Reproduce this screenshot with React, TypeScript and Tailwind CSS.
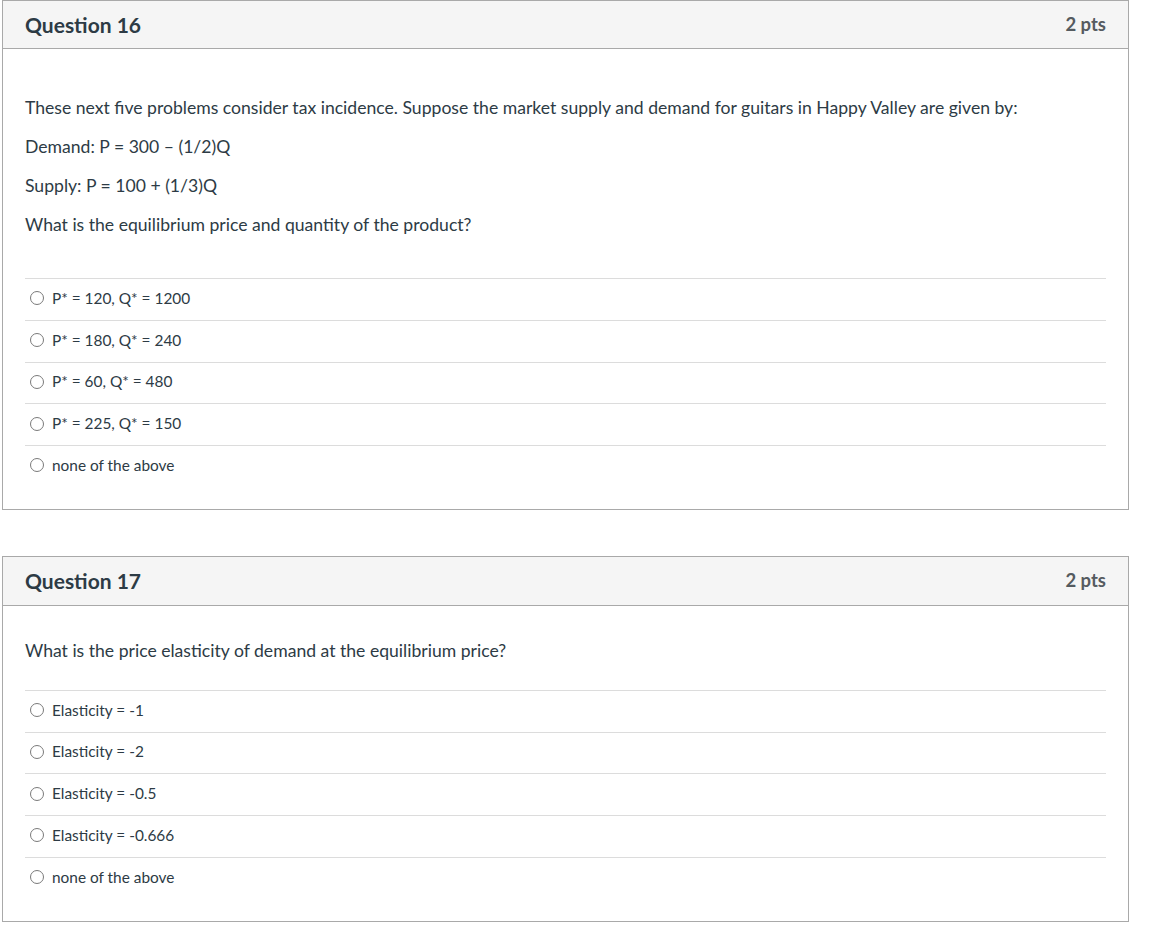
const font = { fontFamily: 'Lato, "Noto Sans", sans-serif' };

interface Question {
  title: string;
  points: string;
  paragraphs: string[];
  answers: string[];
  headerH: string;
  bodyTop: string;
  answersTop: string;
}

const questions: Question[] = [
  {
    title: 'Question 16',
    points: '2 pts',
    paragraphs: [
      'These next five problems consider tax incidence. Suppose the market supply and demand for guitars in Happy Valley are given by:',
      'Demand: P = 300 \u2013 (1/2)Q',
      'Supply: P = 100 + (1/3)Q',
      'What is the equilibrium price and quantity of the product?',
    ],
    answers: ['P* = 120, Q* = 1200', 'P* = 180, Q* = 240', 'P* = 60, Q* = 480', 'P* = 225, Q* = 150', 'none of the above'],
    headerH: 'h-[48px]',
    bodyTop: 'pt-[47px]',
    answersTop: 'mt-[41px]',
  },
  {
    title: 'Question 17',
    points: '2 pts',
    paragraphs: ['What is the price elasticity of demand at the equilibrium price?'],
    answers: ['Elasticity = -1', 'Elasticity = -2', 'Elasticity = -0.5', 'Elasticity = -0.666', 'none of the above'],
    headerH: 'h-[49px]',
    bodyTop: 'pt-[33px]',
    answersTop: 'mt-[27px]',
  },
];

function QuestionCard({ q }: { q: Question }) {
  return (
    <div className="border border-[#a9a9a9] bg-white">
      <div
        className={`flex items-center justify-between border-b border-[#a9a9a9] bg-[#f5f5f5] px-[22px] ${q.headerH}`}
      >
        <h2 className="text-[21px] font-bold text-[#2d3b45]">{q.title}</h2>
        <span className="text-[18.5px] font-bold text-[#555b60]">{q.points}</span>
      </div>
      <div className={`px-[22px] pb-[22px] ${q.bodyTop}`}>
        <div className="flex flex-col gap-[15px] text-[17.6px] leading-6 text-[#2d3b45]">
          {q.paragraphs.map((p) => (
            <p key={p}>{p}</p>
          ))}
        </div>
        <div className={q.answersTop}>
          {q.answers.map((a) => (
            <div key={a} className="flex h-[41.75px] items-center border-t border-[#dcdcdc] pb-[2px] pl-[5px]">
              <span className="h-[14px] w-[14px] shrink-0 rounded-full border border-[#7a7a7a] bg-white" />
              <span className="ml-[8px] text-[15.4px] text-[#2d3b45]">{a}</span>
            </div>
          ))}
        </div>
      </div>
    </div>
  );
}

export default function App() {
  return (
    <div className="min-h-screen bg-white" style={font}>
      <div className="ml-[2px] flex w-[1127px] flex-col gap-[46px]">
        {questions.map((q) => (
          <QuestionCard key={q.title} q={q} />
        ))}
      </div>
    </div>
  );
}
